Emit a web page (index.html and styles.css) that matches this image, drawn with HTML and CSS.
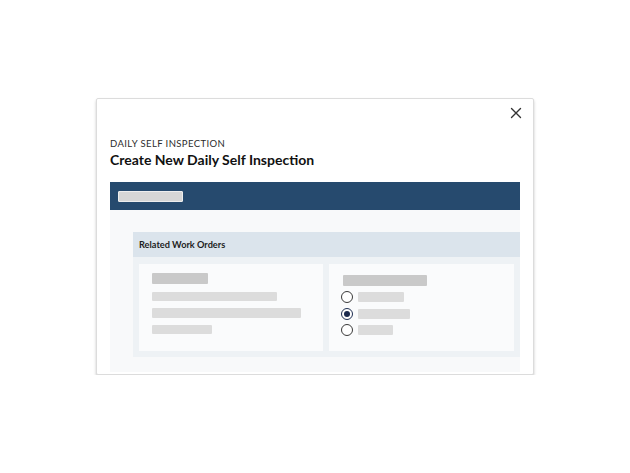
FILE: index.html
```html
<!DOCTYPE html>
<html>
<head>
<meta charset="utf-8">
<link rel="stylesheet" href="styles.css">
</head>
<body>
<div class="stage">
  <div class="modal">
    <div class="close-row">
      <button class="close" aria-label="Close">
        <svg width="12" height="12" viewBox="0 0 12 12"><path d="M1.5 1.5 L10.5 10.5 M10.5 1.5 L1.5 10.5" stroke="#333" stroke-width="1.4" fill="none" stroke-linecap="round"/></svg>
      </button>
    </div>
    <div class="eyebrow">DAILY SELF INSPECTION</div>
    <h1 class="title">Create New Daily Self Inspection</h1>
    <div class="topbar"><span class="ph-top"></span></div>
    <div class="preview">
      <div class="section">
        <div class="section-head">Related Work Orders</div>
        <div class="section-body">
          <div class="pcard left">
            <span class="ph ph-dark w56"></span>
            <span class="ph ph-line w125 mt8"></span>
            <span class="ph ph-line w149 mt7 h10"></span>
            <span class="ph ph-line w60 mt7"></span>
          </div>
          <div class="pcard right">
            <span class="ph ph-dark w84"></span>
            <div class="radios">
              <div class="radio-row"><span class="radio"></span><span class="ph ph-line w46 h10"></span></div>
              <div class="radio-row"><span class="radio on"></span><span class="ph ph-line w52 h10"></span></div>
              <div class="radio-row"><span class="radio"></span><span class="ph ph-line w35 h10"></span></div>
            </div>
          </div>
        </div>
      </div>
    </div>
  </div>
</div>
</body>
</html>
```
FILE: styles.css
```css
* { box-sizing: border-box; }
html, body { margin: 0; padding: 0; background: #fff; }
body { font-family: Lato, "Open Sans", sans-serif; color: #1a1a1a; }

.stage { padding: 98px 0 0 96px; }

.modal {
  width: 438px;
  height: 277px;
  background: #fff;
  border: 1px solid #dcdcdc;
  border-radius: 2px;
  box-shadow: 0 2px 3px rgba(0,0,0,0.22);
  padding: 8px 13px 2px 13px;
  display: flex;
  flex-direction: column;
}

.close-row { display: flex; justify-content: flex-end; height: 12px; margin-right: -2px; }
.close { width: 12px; height: 12px; padding: 0; border: 0; background: none; display: flex; }

.eyebrow {
  margin-top: 19px;
  font-size: 9.5px;
  line-height: 12px;
  letter-spacing: 0.4px;
  color: #2b2b2b;
}
.title {
  margin: 1px 0 0 0;
  font-size: 14px;
  line-height: 18px;
  font-weight: 700;
  color: #111;
}

.topbar {
  margin-top: 13px;
  height: 28px;
  background: #264a6e;
  padding: 9px 0 0 8px;
  display: flex;
  align-items: flex-start;
}
.ph-top {
  width: 65px; height: 11px;
  background: #d6d6d6;
  border: 1px solid #eeeeee;
  border-radius: 1px;
}

.preview {
  flex: 1;
  background: #f8f9fa;
  padding: 22px 0 0 23px;
  overflow: hidden;
}

.section { width: 387px; }
.section-head {
  height: 25px;
  background: #dbe4ec;
  font-size: 9.2px;
  font-weight: 700;
  line-height: 25px;
  padding-left: 6px;
  color: #1d1d1d;
}
.section-body {
  background: #eef2f5;
  padding: 7px 6px 6px 6px;
  display: flex;
  gap: 6px;
}
.pcard {
  background: #fafbfc;
  height: 87px;
  display: flex;
  flex-direction: column;
  align-items: flex-start;
}
.pcard.left { width: 184px; padding: 9px 0 0 13px; }
.pcard.right { width: 185px; padding: 11px 0 0 14px; }

.ph { display: block; height: 9px; border-radius: 1px; }
.ph-dark { background: #c9c9c9; height: 11px; }
.ph-line { background: #dcdcdc; }
.h10 { height: 10px; }
.mt8 { margin-top: 8px; }
.mt7 { margin-top: 7px; }
.w56 { width: 56px; } .w125 { width: 125px; } .w149 { width: 149px; } .w60 { width: 60px; }
.w84 { width: 84px; } .w46 { width: 46px; } .w52 { width: 52px; } .w35 { width: 35px; }

.radios { margin-top: 5px; display: flex; flex-direction: column; gap: 4.5px; margin-left: -2px; }
.radio-row { display: flex; align-items: center; gap: 5px; height: 12px; }
.radio {
  width: 12px; height: 12px;
  border: 1px solid #3a3a3a;
  border-radius: 50%;
  background: #fff;
  display: flex;
  align-items: center;
  justify-content: center;
}
.radio.on { border-color: #1f2f52; }
.radio.on::after {
  content: "";
  width: 6px; height: 6px;
  border-radius: 50%;
  background: #1b2a4e;
}
```
